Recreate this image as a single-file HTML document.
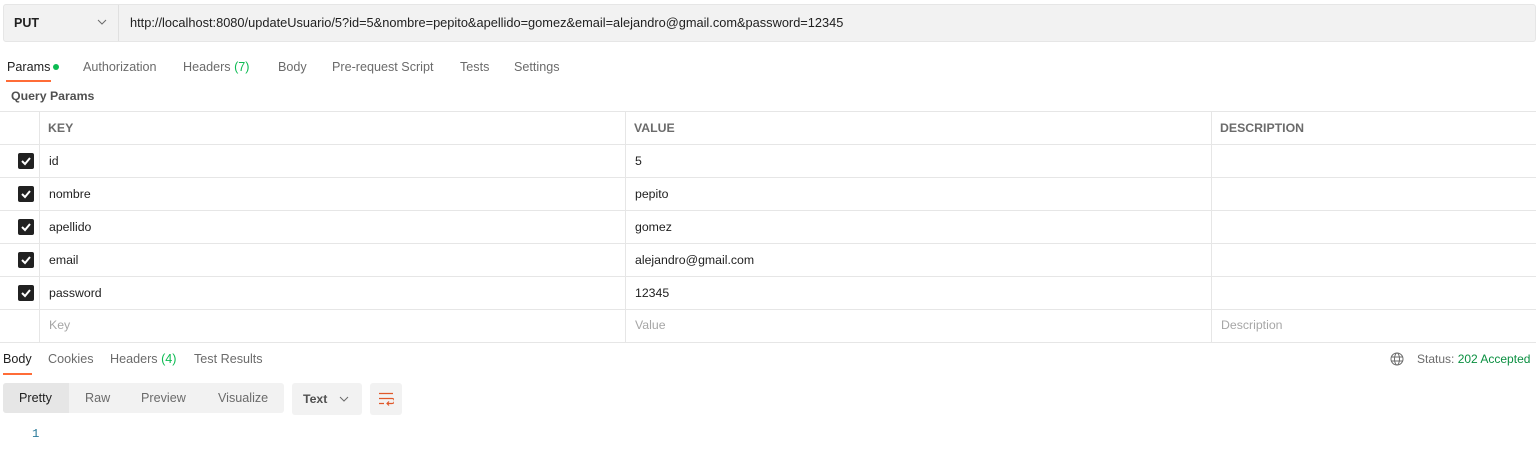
<!DOCTYPE html><html><head><style>
*{margin:0;padding:0;box-sizing:border-box}
body{width:1536px;height:454px;background:#fff;font-family:"Liberation Sans",sans-serif;font-size:12.3px;color:#212121;position:relative;overflow:hidden}
.a{position:absolute;white-space:nowrap}
.hl{position:absolute;left:0;width:1536px;height:1px;background:#e6e6e6}
.vl{position:absolute;width:1px;background:#e6e6e6;top:111px;height:231px}
.cb{position:absolute;left:18px;width:16px;height:16px;background:#212121;border-radius:2px}
.cb svg{position:absolute;left:2px;top:2px}
.t{color:#6b6b6b;font-size:12.6px}
.g{color:#0cbb52}
</style></head><body>
<div class="a" style="left:3px;top:4px;width:1533px;height:38px;background:#f2f2f2;border:1px solid #e6e6e6;border-radius:3px"></div>
<div class="a" style="left:118px;top:5px;width:1px;height:36px;background:#e0e0e0"></div>
<div class="a" style="left:14px;top:16px;font-size:12.5px;font-weight:bold">PUT</div>
<svg class="a" style="left:97px;top:19px" width="10" height="6"><path d="M1 1l4 4 4-4" stroke="#6b6b6b" fill="none"/></svg>
<div class="a" style="left:130px;top:15px;font-size:12.8px">http://localhost:8080/updateUsuario/5?id=5&amp;nombre=pepito&amp;apellido=gomez&amp;email=alejandro@gmail.com&amp;password=12345</div>

<div class="a" style="left:7px;top:60px;font-size:12.6px">Params</div>
<div class="a" style="left:53px;top:64px;width:6px;height:6px;border-radius:50%;background:#0cbb52"></div>
<div class="a" style="left:6px;top:80px;width:45px;height:2px;background:#ff6c37"></div>
<div class="a t" style="left:83px;top:60px">Authorization</div>
<div class="a t" style="left:183px;top:60px">Headers <span class="g">(7)</span></div>
<div class="a t" style="left:278px;top:60px">Body</div>
<div class="a t" style="left:332px;top:60px">Pre-request Script</div>
<div class="a t" style="left:460px;top:60px">Tests</div>
<div class="a t" style="left:514px;top:60px">Settings</div>
<div class="a" style="left:11px;top:89px;font-weight:bold;color:#505050">Query Params</div>

<div class="hl" style="top:111px"></div><div class="hl" style="top:144px"></div><div class="hl" style="top:177px"></div><div class="hl" style="top:210px"></div><div class="hl" style="top:243px"></div><div class="hl" style="top:276px"></div><div class="hl" style="top:309px"></div><div class="hl" style="top:342px"></div>
<div class="vl" style="left:39px"></div><div class="vl" style="left:625px"></div><div class="vl" style="left:1211px"></div>
<div class="a" style="left:48px;top:121px;font-weight:bold;color:#6b6b6b">KEY</div>
<div class="a" style="left:634px;top:121px;font-weight:bold;color:#6b6b6b">VALUE</div>
<div class="a" style="left:1220px;top:121px;font-weight:bold;color:#6b6b6b">DESCRIPTION</div>

<div class="cb" style="top:153px"><svg width="12" height="12"><path d="M2 6l3 3 5-6" stroke="#fff" stroke-width="2" fill="none"/></svg></div>
<div class="cb" style="top:186px"><svg width="12" height="12"><path d="M2 6l3 3 5-6" stroke="#fff" stroke-width="2" fill="none"/></svg></div>
<div class="cb" style="top:219px"><svg width="12" height="12"><path d="M2 6l3 3 5-6" stroke="#fff" stroke-width="2" fill="none"/></svg></div>
<div class="cb" style="top:252px"><svg width="12" height="12"><path d="M2 6l3 3 5-6" stroke="#fff" stroke-width="2" fill="none"/></svg></div>
<div class="cb" style="top:285px"><svg width="12" height="12"><path d="M2 6l3 3 5-6" stroke="#fff" stroke-width="2" fill="none"/></svg></div>

<div class="a" style="left:49px;top:154px">id</div><div class="a" style="left:635px;top:154px">5</div>
<div class="a" style="left:49px;top:187px">nombre</div><div class="a" style="left:635px;top:187px">pepito</div>
<div class="a" style="left:49px;top:220px">apellido</div><div class="a" style="left:635px;top:220px">gomez</div>
<div class="a" style="left:49px;top:253px">email</div><div class="a" style="left:635px;top:253px">alejandro@gmail.com</div>
<div class="a" style="left:49px;top:286px">password</div><div class="a" style="left:635px;top:286px">12345</div>
<div class="a" style="left:49px;top:318px;color:#a6a6a6">Key</div>
<div class="a" style="left:635px;top:318px;color:#a6a6a6">Value</div>
<div class="a" style="left:1221px;top:318px;color:#a6a6a6">Description</div>

<div class="a" style="left:3px;top:352px;font-size:12.6px">Body</div>
<div class="a" style="left:3px;top:373px;width:29px;height:2px;background:#ff6c37"></div>
<div class="a t" style="left:48px;top:352px">Cookies</div>
<div class="a t" style="left:110px;top:352px">Headers <span class="g">(4)</span></div>
<div class="a t" style="left:194px;top:352px">Test Results</div>
<svg class="a" style="left:1390px;top:352px" width="14" height="14" viewBox="0 0 14 14"><g fill="none" stroke="#6b6b6b"><circle cx="7" cy="7" r="6"/><ellipse cx="7" cy="7" rx="2.5" ry="6"/><path d="M1 5h12M1 9h12"/></g></svg>
<div class="a" style="left:1417px;top:352px;color:#6b6b6b;font-size:12px">Status: <span style="color:#0a8f40">202 Accepted</span></div>

<div class="a" style="left:3px;top:383px;width:281px;height:30px;background:#f2f2f2;border-radius:3px"></div>
<div class="a" style="left:3px;top:383px;width:66px;height:30px;background:#e6e6e6;border-radius:3px 0 0 3px"></div>
<div class="a" style="left:19px;top:391px;font-size:12.6px">Pretty</div>
<div class="a t" style="left:85px;top:391px">Raw</div>
<div class="a t" style="left:141px;top:391px">Preview</div>
<div class="a t" style="left:218px;top:391px">Visualize</div>
<div class="a" style="left:292px;top:383px;width:70px;height:32px;background:#f2f2f2;border-radius:3px"></div>
<div class="a" style="left:303px;top:392px;font-weight:bold;color:#505050">Text</div>
<svg class="a" style="left:339px;top:396px" width="10" height="6"><path d="M1 1l4 4 4-4" stroke="#6b6b6b" fill="none"/></svg>
<div class="a" style="left:370px;top:383px;width:32px;height:32px;background:#f2f2f2;border-radius:3px"></div>
<svg class="a" style="left:378px;top:392px" width="16" height="14"><g fill="none" stroke="#e0582a" stroke-width="1.2"><path d="M1 1.5h14M1 6.5h13a2.5 2.5 0 010 5H9M11 9.5l-2 2 2 2M1 11.5h5"/></g></svg>
<div class="a" style="left:32px;top:427px;color:#2a7a9a;font-family:'Liberation Mono',monospace">1</div>
</body></html>
